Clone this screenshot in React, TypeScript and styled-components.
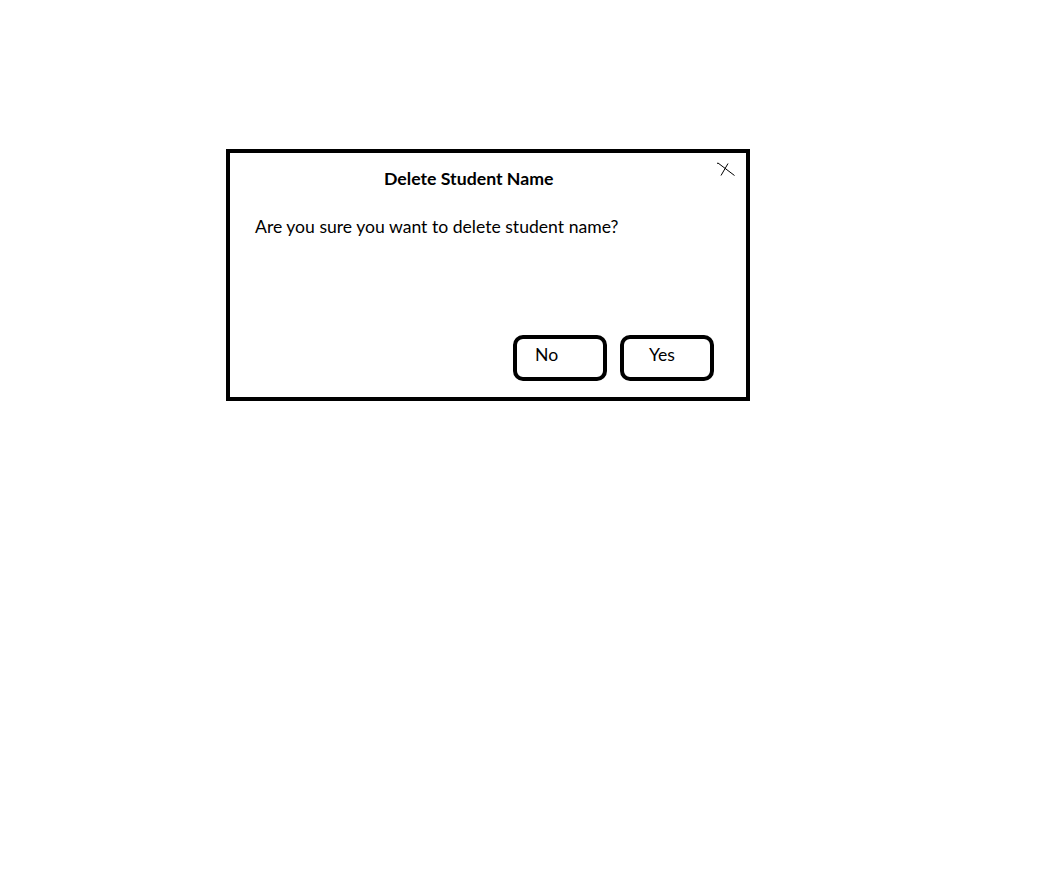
import React from "react";
import styled, { createGlobalStyle } from "styled-components";

const Global = createGlobalStyle`
  html, body { margin: 0; padding: 0; background: #ffffff; }
  body { font-family: Lato, "Open Sans", "Liberation Sans", sans-serif; color: #000; }
`;

const Page = styled.div`
  width: 1056px;
  height: 884px;
  padding: 149px 0 0 226px;
  box-sizing: border-box;
`;

const Dialog = styled.div`
  position: relative;
  width: 524px;
  height: 252px;
  box-sizing: border-box;
  border: 4px solid #000;
  background: #fff;
  display: flex;
  flex-direction: column;
`;

const Title = styled.h2`
  margin: 0;
  padding: 16px 0 0 154px;
  font-size: 17.7px;
  line-height: 20px;
  font-weight: 700;
`;

const Message = styled.p`
  margin: 0;
  padding: 28px 0 0 25px;
  font-size: 17.6px;
  line-height: 20px;
  font-weight: 400;
`;

const Actions = styled.div`
  margin-top: auto;
  display: flex;
  justify-content: flex-end;
  gap: 13px;
  padding: 0 32px 16px 0;
`;

const ActionButton = styled.button<{ $indent: number }>`
  width: 94px;
  height: 46px;
  box-sizing: border-box;
  border: 4px solid #000;
  border-radius: 10px;
  background: #fff;
  padding: 6px 0 0 ${(p) => p.$indent}px;
  display: flex;
  align-items: flex-start;
  font-family: inherit;
  font-size: 17.6px;
  line-height: 20px;
  color: #000;
  cursor: pointer;
`;

const Close = styled.button`
  position: absolute;
  top: 8px;
  right: 10px;
  width: 20px;
  height: 16px;
  padding: 0;
  border: 0;
  background: transparent;
  cursor: pointer;
  display: block;
`;

export default function App() {
  return (
    <>
      <Global />
      <Page>
        <Dialog>
          <Close aria-label="Close">
            <svg width="20" height="16" viewBox="0 0 20 16" fill="none" stroke="#000" strokeWidth="1">
              <path d="M1 2.5 L2 2 L18.5 14.5" />
              <path d="M5 14.5 L12 2.5" />
            </svg>
          </Close>
          <Title>Delete Student Name</Title>
          <Message>Are you sure you want to delete student name?</Message>
          <Actions>
            <ActionButton $indent={18}>No</ActionButton>
            <ActionButton $indent={25}>Yes</ActionButton>
          </Actions>
        </Dialog>
      </Page>
    </>
  );
}
